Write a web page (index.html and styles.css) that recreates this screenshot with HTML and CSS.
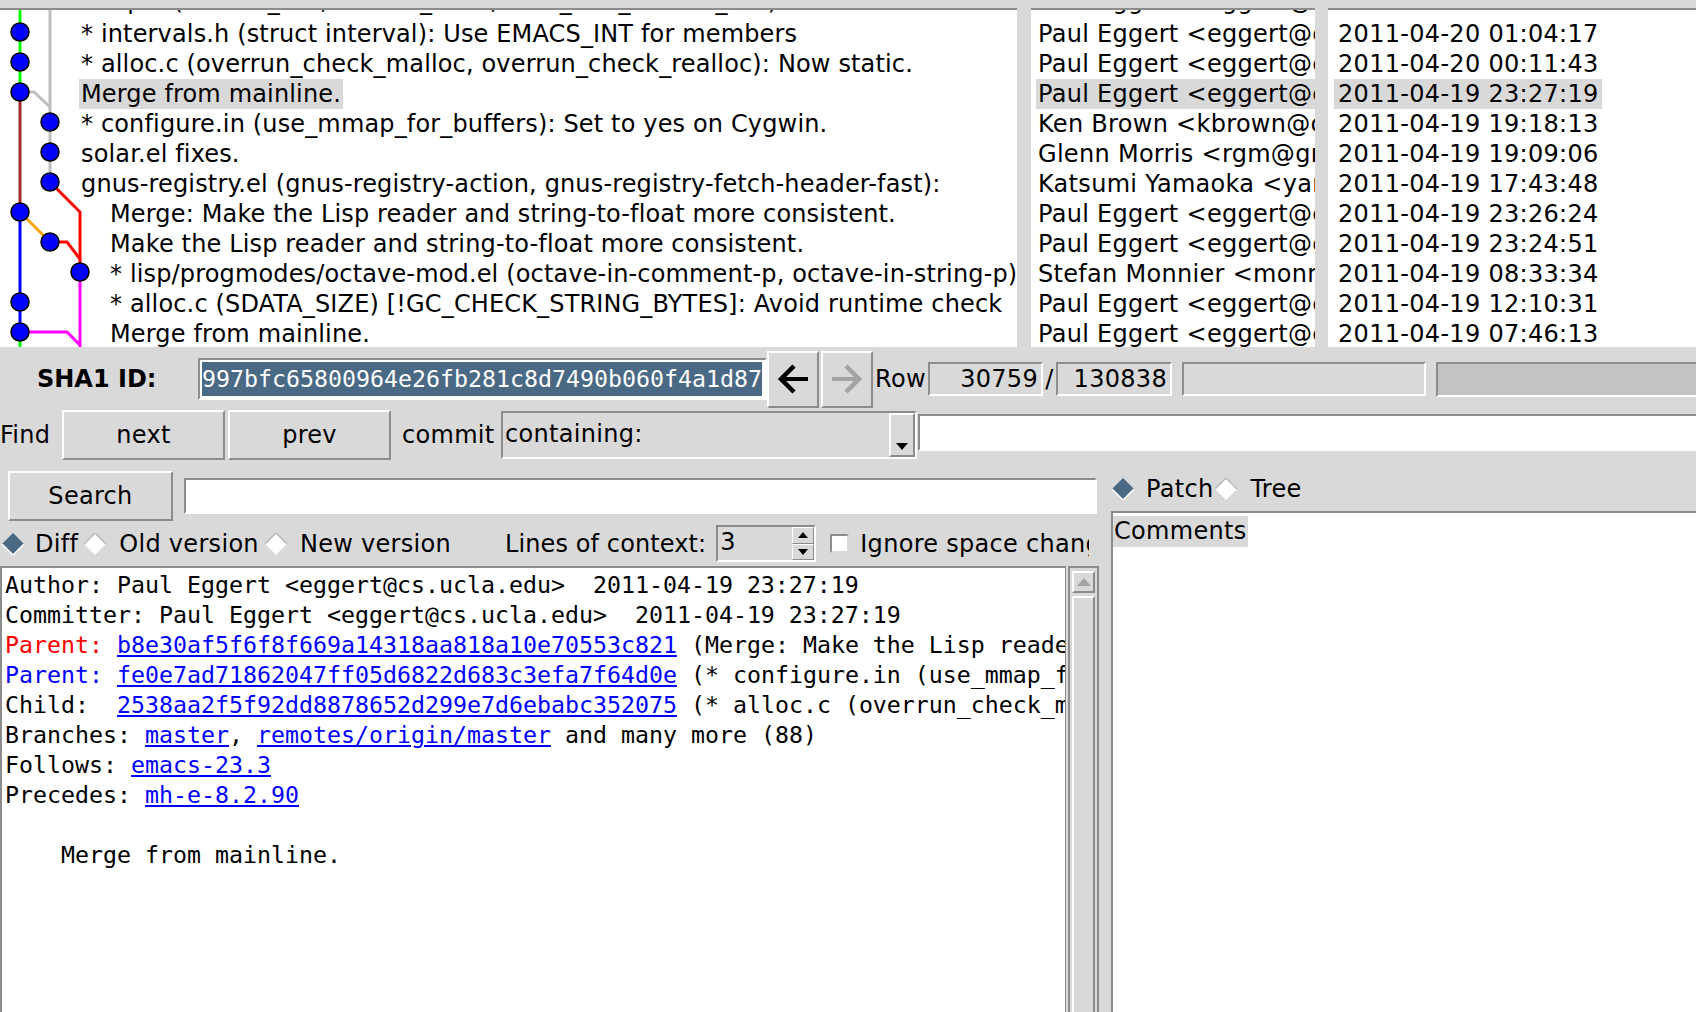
FILE: index.html
```html
<!DOCTYPE html>
<html>
<head>
<meta charset="utf-8">
<title>gitk</title>
<link rel="stylesheet" href="styles.css">
</head>
<body>
<div class="app">
  <div class="lists">
    <div class="pane graph">
      <svg class="graph-canvas" width="100" height="337" viewBox="0 0 100 337">
        <g fill="none" stroke-width="3">
          <path d="M20 -5 V82" stroke="#00ff00"/>
          <path d="M20 82 V202" stroke="#a52a2a"/>
          <path d="M20 202 V322" stroke="#0000ff"/>
          <path d="M20 322 V345" stroke="#00ff00"/>
          <path d="M50 -5 V172" stroke="#bebebe"/>
          <path d="M20 82 H34 L50 97" stroke="#bebebe"/>
          <path d="M50 172 L80 202 V262" stroke="#ff0000"/>
          <path d="M50 232 H67 L80 249" stroke="#ff0000"/>
          <path d="M20 202 L50 232" stroke="#ffa500"/>
          <path d="M80 262 V345" stroke="#ff00ff"/>
          <path d="M20 322 H67 L80 335" stroke="#ff00ff"/>
        </g>
        <g fill="#0000ff" stroke="#000" stroke-width="1.5">
          <circle cx="20" cy="22" r="9"/>
          <circle cx="20" cy="52" r="9"/>
          <circle cx="20" cy="82" r="9"/>
          <circle cx="50" cy="112" r="9"/>
          <circle cx="50" cy="142" r="9"/>
          <circle cx="50" cy="172" r="9"/>
          <circle cx="20" cy="202" r="9"/>
          <circle cx="50" cy="232" r="9"/>
          <circle cx="80" cy="262" r="9"/>
          <circle cx="20" cy="292" r="9"/>
          <circle cx="20" cy="322" r="9"/>
        </g>
      </svg>
      <div class="rows">
        <div class="row first">* lisp.h (EMACS_INT, EMACS_UINT, BITS_PER_EMACS_INT): Define in terms of long long</div>
        <div class="row">* intervals.h (struct interval): Use EMACS_INT for members</div>
        <div class="row">* alloc.c (overrun_check_malloc, overrun_check_realloc): Now static.</div>
        <div class="row"><span class="hl">Merge from mainline.</span></div>
        <div class="row">* configure.in (use_mmap_for_buffers): Set to yes on Cygwin.</div>
        <div class="row">solar.el fixes.</div>
        <div class="row">gnus-registry.el (gnus-registry-action, gnus-registry-fetch-header-fast):</div>
        <div class="row in">Merge: Make the Lisp reader and string-to-float more consistent.</div>
        <div class="row in">Make the Lisp reader and string-to-float more consistent.</div>
        <div class="row in">* lisp/progmodes/octave-mod.el (octave-in-comment-p, octave-in-string-p)</div>
        <div class="row in">* alloc.c (SDATA_SIZE) [!GC_CHECK_STRING_BYTES]: Avoid runtime check</div>
        <div class="row in">Merge from mainline.</div>
      </div>
    </div>
    <div class="pane author">
      <div class="rows">
        <div class="row first">Paul Eggert &lt;eggert@cs.ucla.edu&gt;</div>
        <div class="row">Paul Eggert &lt;eggert@cs.ucla.edu&gt;</div>
        <div class="row">Paul Eggert &lt;eggert@cs.ucla.edu&gt;</div>
        <div class="row"><span class="hl">Paul Eggert &lt;eggert@cs.ucla.edu&gt;</span></div>
        <div class="row">Ken Brown &lt;kbrown@cornell.edu&gt;</div>
        <div class="row">Glenn Morris &lt;rgm@gnu.org&gt;</div>
        <div class="row">Katsumi Yamaoka &lt;yamaoka@jpl.org&gt;</div>
        <div class="row">Paul Eggert &lt;eggert@cs.ucla.edu&gt;</div>
        <div class="row">Paul Eggert &lt;eggert@cs.ucla.edu&gt;</div>
        <div class="row">Stefan Monnier &lt;monnier@iro.umontreal.ca&gt;</div>
        <div class="row">Paul Eggert &lt;eggert@cs.ucla.edu&gt;</div>
        <div class="row">Paul Eggert &lt;eggert@cs.ucla.edu&gt;</div>
      </div>
    </div>
    <div class="pane date">
      <div class="rows">
        <div class="row first">2011-04-20 01:12:05</div>
        <div class="row">2011-04-20 01:04:17</div>
        <div class="row">2011-04-20 00:11:43</div>
        <div class="row"><span class="hl">2011-04-19 23:27:19</span></div>
        <div class="row">2011-04-19 19:18:13</div>
        <div class="row">2011-04-19 19:09:06</div>
        <div class="row">2011-04-19 17:43:48</div>
        <div class="row">2011-04-19 23:26:24</div>
        <div class="row">2011-04-19 23:24:51</div>
        <div class="row">2011-04-19 08:33:34</div>
        <div class="row">2011-04-19 12:10:31</div>
        <div class="row">2011-04-19 07:46:13</div>
      </div>
    </div>
  </div>

  <div class="sha-bar">
    <div class="sha-label">SHA1 ID:</div>
    <div class="entry sha-entry"><span class="sel">997bfc65800964e26fb281c8d7490b060f4a1d87</span></div>
    <div class="btn arrow-btn">
      <svg width="32" height="32" viewBox="0 0 32 32"><path d="M6 16 H31" stroke="#000" stroke-width="4"/><path d="M17 3 L4 16 L17 29" fill="none" stroke="#000" stroke-width="4.5"/></svg>
    </div>
    <div class="btn arrow-btn second">
      <svg width="32" height="32" viewBox="0 0 32 32"><path d="M1 16 H26" stroke="#a3a3a3" stroke-width="4"/><path d="M15 3 L28 16 L15 29" fill="none" stroke="#a3a3a3" stroke-width="4.5"/></svg>
    </div>
    <div class="row-label">Row</div>
    <div class="entry ro-entry e-row">30759</div>
    <div class="slash">/</div>
    <div class="entry ro-entry e-total">130838</div>
    <div class="entry ro-entry e-status"></div>
    <div class="progress"></div>
  </div>

  <div class="find-bar">
    <div class="find-label">Find</div>
    <div class="btn fbtn">next</div>
    <div class="btn fbtn second">prev</div>
    <div class="commit-label">commit</div>
    <div class="combo">
      <div class="combo-text">containing:</div>
      <div class="combo-btn"><svg width="12" height="7" viewBox="0 0 12 7"><path d="M0 0 H12 L6 7 Z" fill="#000"/></svg></div>
    </div>
    <div class="entry find-entry"></div>
  </div>

  <div class="lower">
    <div class="left-pane">
      <div class="search-row">
        <div class="btn search-btn">Search</div>
        <div class="entry search-entry"></div>
      </div>
      <div class="opts-row">
        <svg class="dia first" width="22" height="22" viewBox="0 0 22 22"><path d="M11 0 L22 11 L11 22 L0 11 Z" fill="#4a6984"/><path d="M0 11 L11 22 L22 11" fill="none" stroke="#ffffff" stroke-width="1.5"/></svg>
        <span class="rl l1">Diff</span>
        <svg class="dia d2" width="22" height="22" viewBox="0 0 22 22"><path d="M11 0 L22 11 L11 22 L0 11 Z" fill="#ffffff"/><path d="M0 11 L11 0 L22 11" fill="none" stroke="#b8b8b8" stroke-width="1.5"/></svg>
        <span class="rl l2">Old version</span>
        <svg class="dia d3" width="22" height="22" viewBox="0 0 22 22"><path d="M11 0 L22 11 L11 22 L0 11 Z" fill="#ffffff"/><path d="M0 11 L11 0 L22 11" fill="none" stroke="#b8b8b8" stroke-width="1.5"/></svg>
        <span class="rl l3">New version</span>
        <span class="ctx-label">Lines of context:</span>
        <div class="spin">
          <div class="spin-text">3</div>
          <div class="spin-btns">
            <div class="spin-b"><svg width="10" height="6" viewBox="0 0 10 6"><path d="M0 6 H10 L5 0 Z" fill="#000"/></svg></div>
            <div class="spin-b"><svg width="10" height="6" viewBox="0 0 10 6"><path d="M0 0 H10 L5 6 Z" fill="#000"/></svg></div>
          </div>
        </div>
        <div class="check"></div>
        <span class="ign">Ignore space change</span>
      </div>
      <div class="diff-area">
<div class="textbox diff">Author: Paul Eggert &lt;eggert@cs.ucla.edu&gt;  2011-04-19 23:27:19
Committer: Paul Eggert &lt;eggert@cs.ucla.edu&gt;  2011-04-19 23:27:19
<span class="red">Parent: </span><span class="lnk">b8e30af5f6f8f669a14318aa818a10e70553c821</span> (Merge: Make the Lisp reader and string-to-float more consistent.)
<span class="blue">Parent: </span><span class="lnk">fe0e7ad71862047ff05d6822d683c3efa7f64d0e</span> (* configure.in (use_mmap_for_buffers): Set to yes on Cygwin.)
Child:  <span class="lnk">2538aa2f5f92dd8878652d299e7d6ebabc352075</span> (* alloc.c (overrun_check_malloc, overrun_check_realloc): Now static.)
Branches: <span class="lnk">master</span>, <span class="lnk">remotes/origin/master</span> and many more (88)
Follows: <span class="lnk">emacs-23.3</span>
Precedes: <span class="lnk">mh-e-8.2.90</span>

    Merge from mainline.
</div>
        <div class="vscroll">
          <div class="sb-arrow"><svg width="14" height="8" viewBox="0 0 14 8"><path d="M0 8 H14 L7 0 Z" fill="#a3a3a3"/></svg></div>
          <div class="sb-slider"></div>
        </div>
      </div>
    </div>
    <div class="right-pane">
      <div class="ropts">
        <svg class="dia" width="22" height="22" viewBox="0 0 22 22"><path d="M11 0 L22 11 L11 22 L0 11 Z" fill="#4a6984"/><path d="M0 11 L11 22 L22 11" fill="none" stroke="#ffffff" stroke-width="1.5"/></svg>
        <span class="rl p1">Patch</span>
        <svg class="dia d4" width="22" height="22" viewBox="0 0 22 22"><path d="M11 0 L22 11 L11 22 L0 11 Z" fill="#ffffff"/><path d="M0 11 L11 0 L22 11" fill="none" stroke="#b8b8b8" stroke-width="1.5"/></svg>
        <span class="rl p2">Tree</span>
      </div>
      <div class="textbox files"><span class="hl2">Comments</span></div>
    </div>
  </div>
</div>
</body>
</html>
```

FILE: styles.css
```css
* { box-sizing: border-box; }
html, body { margin: 0; padding: 0; }
body {
  width: 1696px;
  height: 1012px;
  overflow: hidden;
  background: #d9d9d9;
  font-family: "DejaVu Sans", "Liberation Sans", sans-serif;
  font-size: 24px;
  letter-spacing: 0.3px;
  color: #000;
}
.app { display: flex; flex-direction: column; height: 1012px; }

/* commit lists */
.lists { display: flex; height: 341px; margin-top: 8px; flex: none; }
.pane {
  position: relative;
  background: #fff;
  border-top: 2px solid #8c8c8c;
  height: 339px;
  overflow: hidden;
}
.graph { width: 1017px; }
.author { width: 284px; margin-left: 14px; }
.date { flex: 1; margin-left: 13px; }
.graph-canvas { position: absolute; left: 0; top: 0; z-index: 1; }
.rows { margin-top: -21px; }
.row { height: 30px; line-height: 30px; white-space: nowrap; }
.row.first { line-height: 24px; }
.graph .row { padding-left: 81px; letter-spacing: 0.15px; }
.graph .row.in { padding-left: 110px; }
.author .row { padding-left: 7px; }
.date .row { padding-left: 10px; }
.hl {
  display: inline-block;
  height: 30px;
  background: #d9d9d9;
  padding: 0 2px;
  margin-left: -2px;
}
.date .hl { padding: 0 3px 0 4px; margin-left: -4px; }

/* common widgets */
.entry {
  border: 2px solid;
  border-color: #8c8c8c #ffffff #ffffff #8c8c8c;
  background: #fff;
  flex: none;
}
.btn {
  border: 2px solid;
  border-color: #ffffff #8c8c8c #8c8c8c #ffffff;
  background: #d9d9d9;
  display: flex;
  align-items: center;
  justify-content: center;
  flex: none;
}

/* SHA bar */
.sha-bar { display: flex; align-items: center; height: 60px; flex: none; }
.sha-label { width: 198px; padding-left: 37px; font-weight: bold; letter-spacing: 0; flex: none; }
.sha-entry {
  width: 569px;
  height: 42px;
  padding: 2px;
  font-family: "DejaVu Sans Mono", "Liberation Mono", monospace;
  font-size: 23.25px;
  letter-spacing: 0;
  line-height: 34px;
  overflow: hidden;
  white-space: nowrap;
}
.sel { display: inline-block; height: 34px; background: #4a6984; color: #ffffff; }
.arrow-btn { width: 52px; height: 57px; }
.arrow-btn.second { margin-left: 2px; }
.row-label { margin-left: 2px; width: 53px; flex: none; }
.ro-entry {
  background: #d9d9d9;
  height: 34px;
  line-height: 30px;
  text-align: right;
  padding-right: 3px;
}
.e-row { width: 115px; }
.slash { width: 13px; text-align: center; flex: none; }
.e-total { width: 116px; }
.e-status { width: 244px; margin-left: 10px; }
.progress {
  flex: 1;
  margin-left: 10px;
  height: 35px;
  background: #c3c3c3;
  border: 2px solid;
  border-color: #8c8c8c #ffffff #ffffff #8c8c8c;
  border-right: none;
}

/* Find bar */
.find-bar { display: flex; align-items: center; height: 52px; flex: none; }
.find-label { width: 62px; flex: none; }
.fbtn { width: 163px; height: 50px; }
.fbtn.second { margin-left: 3px; }
.commit-label { margin-left: 11px; width: 99px; flex: none; }
.combo {
  width: 416px;
  height: 48px;
  display: flex;
  flex: none;
  border: 2px solid;
  border-color: #8c8c8c #ffffff #ffffff #8c8c8c;
  background: #d9d9d9;
}
.combo-text { flex: 1; padding-left: 2px; line-height: 42px; }
.combo-btn {
  width: 26px;
  border: 2px solid;
  border-color: #ffffff #8c8c8c #8c8c8c #ffffff;
  display: flex;
  align-items: flex-end;
  justify-content: center;
  padding-bottom: 5px;
}
.find-entry { flex: 1; height: 37px; margin-left: 1px; align-self: flex-start; margin-top: 5px; border-right: none; }

/* lower area */
.lower { flex: 1; display: flex; min-height: 0; }
.left-pane { width: 1099px; display: flex; flex-direction: column; flex: none; }
.search-row { display: flex; align-items: center; height: 50px; margin-top: 10px; flex: none; }
.search-btn { margin-left: 8px; width: 165px; height: 50px; }
.search-entry { margin-left: 11px; width: 913px; height: 36px; }
.opts-row { display: flex; align-items: center; height: 45px; flex: none; white-space: nowrap; }
.dia { flex: none; display: block; }
.dia.first { margin-left: 2px; }
.rl { flex: none; }
.l1 { margin-left: 11px; }
.d2 { margin-left: 6px; }
.l2 { margin-left: 13px; }
.d3 { margin-left: 6px; }
.l3 { margin-left: 13px; }
.ctx-label { margin-left: 54px; flex: none; letter-spacing: 0.1px; }
.spin {
  width: 100px;
  height: 37px;
  margin-left: 10px;
  flex: none;
  display: flex;
  border: 2px solid;
  border-color: #8c8c8c #ffffff #ffffff #8c8c8c;
  background: #d9d9d9;
}
.spin-text { flex: 1; padding-left: 2px; line-height: 31px; }
.spin-btns { width: 22px; display: flex; flex-direction: column; }
.spin-b {
  flex: 1;
  border: 1px solid;
  border-color: #ffffff #8c8c8c #8c8c8c #ffffff;
  display: flex;
  align-items: center;
  justify-content: center;
}
.check {
  width: 19px;
  height: 19px;
  margin-left: 14px;
  flex: none;
  background: #fff;
  border: 2px solid;
  border-color: #8c8c8c #d9d9d9 #d9d9d9 #8c8c8c;
}
.ign { margin-left: 11px; width: 229px; overflow: hidden; flex: none; }

.diff-area { flex: 1; display: flex; min-height: 0; }
.textbox {
  background: #fff;
  border-top: 2px solid #8c8c8c;
  border-left: 2px solid #8c8c8c;
  overflow: hidden;
}
.diff {
  width: 1066px;
  flex: none;
  padding: 2px 0 0 3px;
  font-family: "DejaVu Sans Mono", "Liberation Mono", monospace;
  font-size: 23.25px;
  letter-spacing: 0;
  line-height: 30px;
  white-space: pre;
  border-right: 1px solid #8c8c8c;
  margin-right: 2px;
}
.red { color: #ff0000; }
.blue { color: #0000ff; }
.lnk { color: #0000ff; text-decoration: underline; }
.vscroll {
  width: 31px;
  flex: none;
  border: 2px solid #8c8c8c;
  border-bottom: none;
  padding: 3px 2px 0 2px;
  display: flex;
  flex-direction: column;
  gap: 3px;
  background: #d9d9d9;
}
.sb-arrow {
  height: 22px;
  flex: none;
  border: 2px solid;
  border-color: #ffffff #8c8c8c #8c8c8c #ffffff;
  display: flex;
  align-items: center;
  justify-content: center;
}
.sb-slider {
  flex: 1;
  border: 2px solid;
  border-color: #ffffff #8c8c8c #8c8c8c #ffffff;
  border-bottom: none;
}

.right-pane { flex: 1; margin-left: 4px; display: flex; flex-direction: column; min-width: 0; }
.ropts { display: flex; align-items: center; height: 50px; padding-top: 6px; padding-left: 9px; flex: none; }
.p1 { margin-left: 12px; }
.d4 { margin-left: 2px; }
.p2 { margin-left: 13px; }
.files { flex: 1; margin-left: 8px; padding-top: 3px; white-space: nowrap; }
.hl2 {
  display: inline-block;
  height: 31px;
  line-height: 31px;
  background: #d9d9d9;
  padding: 0 1px;
}
```
